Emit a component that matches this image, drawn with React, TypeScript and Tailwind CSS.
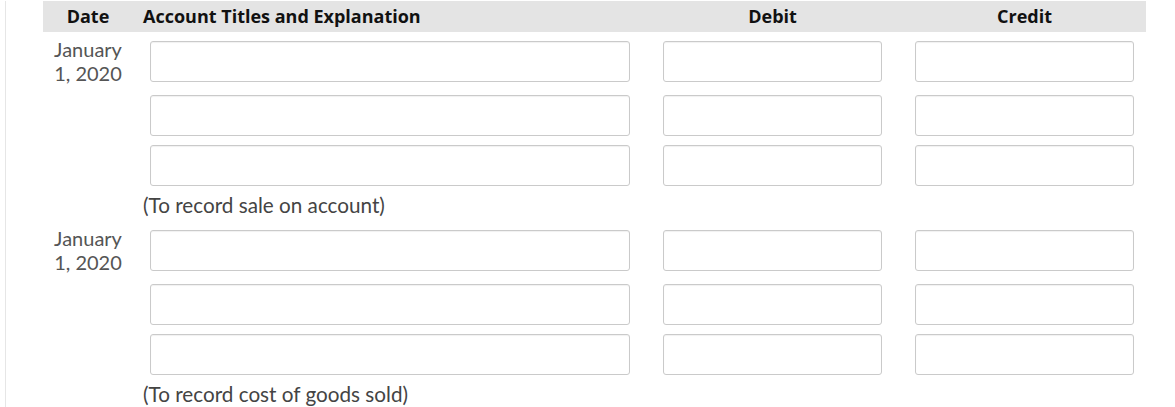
import React from "react";

const body = { fontFamily: "Lato, 'Open Sans', sans-serif" };
const head = { fontFamily: "'Open Sans', 'Liberation Sans', sans-serif" };

const Field = ({ className }: { className: string }) => (
  <input
    type="text"
    className={`h-[41px] rounded-[3px] border border-[#cacaca] bg-white shadow-[inset_0_1px_1px_rgba(0,0,0,0.06)] outline-none ${className}`}
  />
);

const EntryRow = ({ date, className }: { date?: string[]; className: string }) => (
  <div className={`flex items-start ${className}`}>
    <div className="w-[90px] text-center text-[20px] leading-[24px] text-[#555]">
      {date?.map((line) => <div key={line}>{line}</div>)}
    </div>
    <Field className={`ml-[17px] w-[480px] ${date ? "mt-[4px]" : ""}`} />
    <Field className={`ml-[33px] w-[219px] ${date ? "mt-[4px]" : ""}`} />
    <Field className={`ml-[33px] w-[219px] ${date ? "mt-[4px]" : ""}`} />
  </div>
);

const Entry = ({ caption, first }: { caption: string; first?: boolean }) => (
  <div className={first ? "mt-[5px]" : "mt-[10px]"}>
    <EntryRow date={["January", "1, 2020"]} className="" />
    <EntryRow className="mt-[10px]" />
    <EntryRow className="mt-[9px]" />
    <p className="ml-[100px] mt-[8px] text-[20.7px] leading-[22px] text-[#444]">{caption}</p>
  </div>
);

export default function App() {
  return (
    <div className="h-[407px] w-[1175px] overflow-hidden bg-white pl-[5px]" style={body}>
      <div className="h-full border-l border-[#e6e6e6] pl-[37px]">
        <div
          className="mt-[1px] flex h-[31px] w-[1103px] items-center bg-[#e4e4e4] text-[18px] font-bold text-[#111]"
          style={head}
        >
          <div className="w-[90px] text-center">Date</div>
          <div className="ml-[10px] w-[520px]">Account Titles and Explanation</div>
          <div className="w-[219px] text-center">Debit</div>
          <div className="ml-[33px] w-[219px] text-center">Credit</div>
        </div>
        <Entry caption="(To record sale on account)" first />
        <Entry caption="(To record cost of goods sold)" />
      </div>
    </div>
  );
}
